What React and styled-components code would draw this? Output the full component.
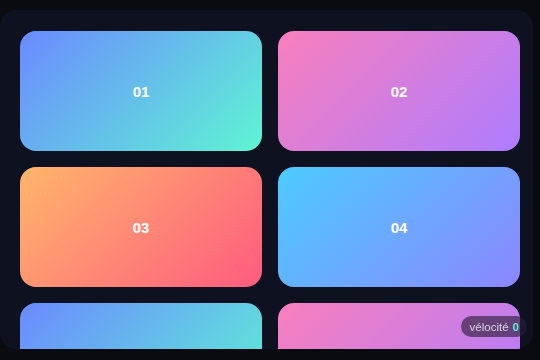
import React from 'react';
import styled, { createGlobalStyle } from 'styled-components';

const Global = createGlobalStyle`
    html, body {
        margin: 0;
        padding: 0;
        background: #0a0b10;
        font-family: "Liberation Sans", Arial, sans-serif;
    }
`

const Page = styled.div`
    width: 540px;
    height: 360px;
    overflow: hidden;
    padding-top: 10px;
    box-sizing: border-box;
`

const Panel = styled.div`
    width: 533px;
    height: 339px;
    box-sizing: border-box;
    background: #0e1220;
    border-radius: 16px;
    padding: 21px 13px 0 20px;
    overflow: hidden;
`

const Grid = styled.div`
    display: grid;
    grid-template-columns: 242px 242px;
    grid-auto-rows: 120px;
    gap: 16px;
`

const gradients = [
    'linear-gradient(135deg, #6b8aff 0%, #5ef5d3 100%)',
    'linear-gradient(135deg, #f97fbd 0%, #ad7cff 100%)',
    'linear-gradient(135deg, #ffb56b 0%, #ff5b7f 100%)',
    'linear-gradient(135deg, #4ccbff 0%, #8c86ff 100%)',
]

const Card = styled.div`
    border-radius: 16px;
    background: ${({ $tone }) => gradients[$tone]};
    display: flex;
    align-items: center;
    justify-content: center;
    color: #fff;
    font-weight: 700;
    font-size: 15px;
`

const Badge = styled.div`
    position: fixed;
    right: 13px;
    bottom: 23px;
    height: 21px;
    padding: 0 8px 0 9px;
    border-radius: 11px;
    background: rgba(40, 28, 54, 0.62);
    color: #d9d6e2;
    font-size: 11.5px;
    display: flex;
    align-items: center;
    gap: 4px;
    b {
        color: #5ef2d4;
        font-weight: 700;
    }
`

const cards = [
    { label: '01', tone: 0 },
    { label: '02', tone: 1 },
    { label: '03', tone: 2 },
    { label: '04', tone: 3 },
    { label: '05', tone: 0 },
    { label: '06', tone: 1 },
]

export default function App() {
    return (
        <Page>
            <Global />
            <Panel>
                <Grid>
                    {cards.map((card) => (
                        <Card key={card.label} $tone={card.tone}>
                            {card.label}
                        </Card>
                    ))}
                </Grid>
            </Panel>
            <Badge>vélocité <b>0</b></Badge>
        </Page>
    )
}
